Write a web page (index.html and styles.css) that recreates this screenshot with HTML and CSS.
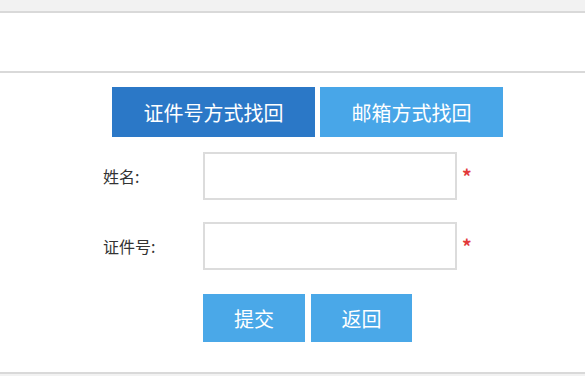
FILE: index.html
```html
<!DOCTYPE html>
<html lang="zh-CN">
<head>
<meta charset="utf-8">
<title>找回</title>
<link rel="stylesheet" href="styles.css">
</head>
<body>
<div class="page">
  <div class="topbar"></div>
  <div class="header"></div>
  <div class="main">
    <div class="tabs">
      <button class="tab tab-active">证件号方式找回</button>
      <button class="tab tab-idle">邮箱方式找回</button>
    </div>
    <div class="form">
      <div class="row">
        <label class="label">姓名:</label>
        <input class="field" type="text">
        <span class="req">*</span>
      </div>
      <div class="row">
        <label class="label">证件号:</label>
        <input class="field" type="text">
        <span class="req">*</span>
      </div>
    </div>
    <div class="actions">
      <button class="btn btn-submit">提交</button>
      <button class="btn btn-back">返回</button>
    </div>
  </div>
  <div class="footer"></div>
</div>
</body>
</html>
```
FILE: styles.css
```css
* { box-sizing: border-box; }
html, body {
  margin: 0;
  padding: 0;
  background: #fff;
  font-family: "Noto Sans CJK SC", "Noto Sans", sans-serif;
  overflow: hidden;
}
.page {
  width: 585px;
  height: 376px;
  display: flex;
  flex-direction: column;
}
.topbar {
  height: 13px;
  background: #f2f2f2;
  border-bottom: 2px solid #d9d9d9;
}
.header {
  height: 60px;
  background: #fff;
  border-bottom: 2px solid #d9d9d9;
}
.main {
  height: 299px;
  padding-top: 14px;
  display: flex;
  flex-direction: column;
}
.tabs {
  display: flex;
  gap: 5px;
  margin-left: 112px;
}
.tab, .btn {
  border: none;
  margin: 0;
  padding: 0;
  color: #fff;
  font-family: inherit;
  font-size: 20px;
  font-weight: 400;
  height: 50px;
  cursor: pointer;
}
.tab-active {
  width: 203px;
  background: #2b78c7;
}
.tab-idle {
  width: 183px;
  background: #48a6e8;
}
.form {
  margin-top: 15px;
  display: flex;
  flex-direction: column;
  gap: 22px;
  padding-left: 103px;
}
.row {
  display: grid;
  grid-template-columns: 100px 254px auto;
  align-items: center;
}
.label {
  font-size: 16px;
  color: #333;
}
.field {
  height: 48px;
  width: 254px;
  border: 2px solid #dcdcdc;
  background: #fff;
  margin: 0;
  outline: none;
}
.req {
  color: #e23a3a;
  font-size: 19px;
  font-weight: 700;
  margin-left: 5px;
  margin-top: -2px;
}
.actions {
  margin-top: 24px;
  margin-left: 203px;
  display: flex;
  gap: 6px;
}
.btn {
  height: 48px;
  background: #4aa8e8;
}
.btn-submit { width: 102px; }
.btn-back { width: 101px; }
.footer {
  flex: 1;
  background: #f2f2f2;
  border-top: 2px solid #d9d9d9;
}
```
